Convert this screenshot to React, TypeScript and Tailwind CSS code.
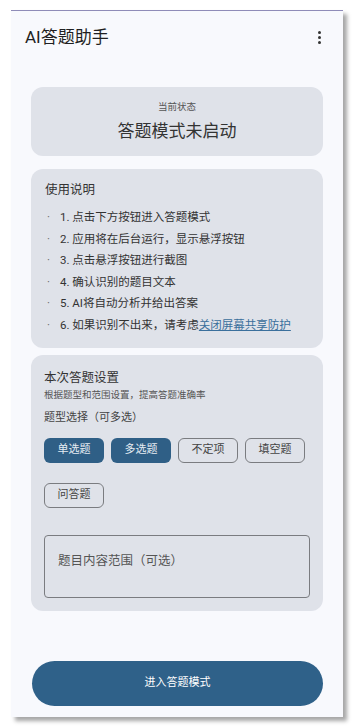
const FONT = { fontFamily: 'Roboto, "Noto Sans CJK SC", sans-serif' };

const steps = [
  "1. 点击下方按钮进入答题模式",
  "2. 应用将在后台运行，显示悬浮按钮",
  "3. 点击悬浮按钮进行截图",
  "4. 确认识别的题目文本",
  "5. AI将自动分析并给出答案",
];

const types = [
  { label: "单选题", on: true },
  { label: "多选题", on: true },
  { label: "不定项", on: false },
  { label: "填空题", on: false },
  { label: "问答题", on: false },
];

function Chip({ label, on }: { label: string; on: boolean }) {
  return (
    <button
      className={
        on
          ? "h-[25px] w-[60px] rounded-[6px] bg-[#2f5f86] text-[11px] text-[#e6ecf2]"
          : "h-[25px] w-[60px] rounded-[6px] border border-[#7a7c80] text-[11px] text-[#444]"
      }
    >
      {label}
    </button>
  );
}

export default function App() {
  return (
    <div className="h-[727px] w-[354px] bg-white pl-[11px] pt-[10px]" style={FONT}>
      <div className="flex h-[707px] w-[332px] flex-col border-t border-[#8f8cb8] bg-[#f8f9fd] shadow-[4px_4px_4px_rgba(0,0,0,0.35)]">
        {/* header */}
        <div className="flex h-[53px] items-center justify-between pl-[14px] pr-[22px]">
          <span className="text-[17px] text-[#1f1f22]">AI答题助手</span>
          <div className="flex flex-col gap-[2px]">
            <span className="h-[3px] w-[3px] rounded-full bg-[#333]" />
            <span className="h-[3px] w-[3px] rounded-full bg-[#333]" />
            <span className="h-[3px] w-[3px] rounded-full bg-[#333]" />
          </div>
        </div>

        <div className="flex flex-col px-[20px] pt-[23px]">
          {/* status */}
          <div className="flex h-[69px] flex-col items-center rounded-[12px] bg-[#dfe2e9] pt-[13px]">
            <span className="text-[9.5px] leading-[14px] text-[#555]">当前状态</span>
            <span className="mt-[5px] text-[17px] leading-[24px] text-[#333]">答题模式未启动</span>
          </div>

          {/* instructions */}
          <div className="mt-[13px] rounded-[12px] bg-[#dfe2e9] px-[14px] pb-[11px] pt-[11px]">
            <div className="text-[12.5px] leading-[20px] text-[#333]">使用说明</div>
            <ul className="mt-[7px]">
              {steps.map((s) => (
                <li key={s} className="flex text-[11.5px] leading-[21.6px] text-[#333]">
                  <span className="w-[15px] pl-[2px] text-[#666]">·</span>
                  <span>{s}</span>
                </li>
              ))}
              <li className="flex text-[11.5px] leading-[21.6px] text-[#333]">
                <span className="w-[15px] pl-[2px] text-[#666]">·</span>
                <span>
                  6. 如果识别不出来，请考虑
                  <span className="text-[#3a6f9c] underline">关闭屏幕共享防护</span>
                </span>
              </li>
            </ul>
          </div>

          {/* settings */}
          <div className="mt-[7px] rounded-[12px] bg-[#dfe2e9] px-[13px] pb-[13px] pt-[13px]">
            <div className="text-[12.5px] leading-[20px] text-[#333]">本次答题设置</div>
            <div className="text-[9.5px] leading-[14px] text-[#555]">根据题型和范围设置，提高答题准确率</div>
            <div className="mt-[7px] text-[11px] leading-[18px] text-[#444]">题型选择（可多选）</div>
            <div className="mt-[11px] flex flex-wrap gap-x-[7px] gap-y-[20px]">
              {types.map((t) => (
                <Chip key={t.label} label={t.label} on={t.on} />
              ))}
            </div>
            <div className="mt-[27px] h-[63px] rounded-[4px] border border-[#7a7c80] pl-[13px] pt-[12px]">
              <span className="text-[12.5px] leading-[20px] text-[#555]">题目内容范围（可选）</span>
            </div>
          </div>
        </div>

        <div className="mt-auto px-[20px] pb-[11px] pl-[21px]">
          <button className="h-[45px] w-full rounded-full bg-[#2f6189] text-[11px] text-white">
            进入答题模式
          </button>
        </div>
      </div>
    </div>
  );
}
